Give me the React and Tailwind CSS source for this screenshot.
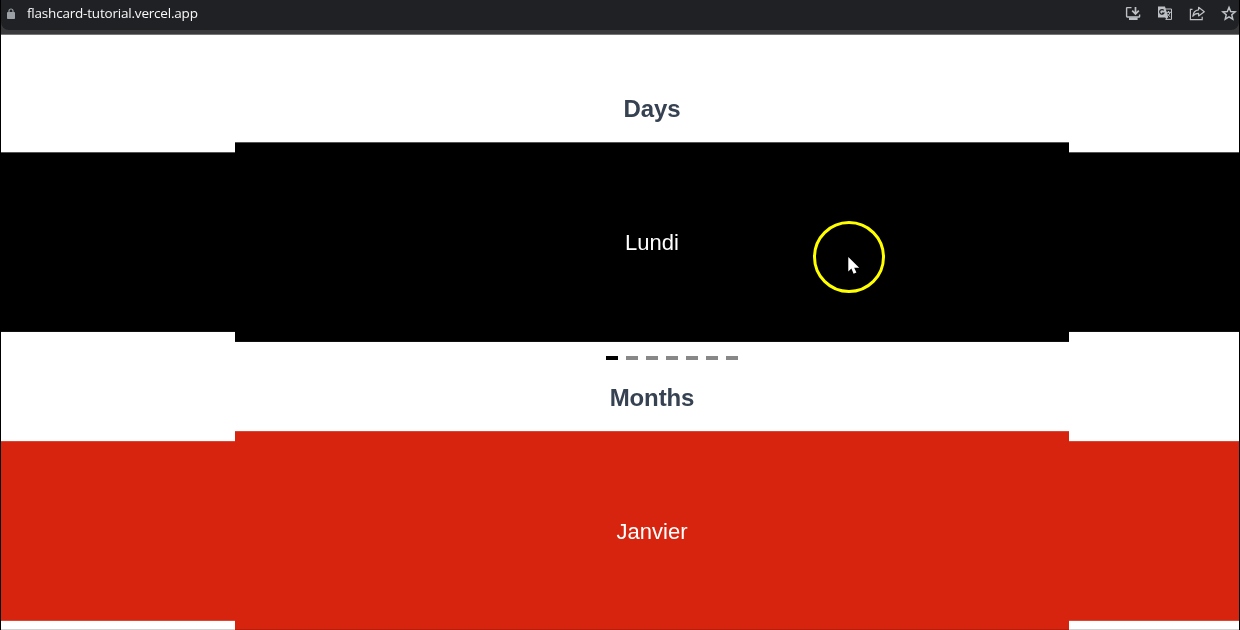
const BrowserBar = () => (
  <header className="h-[35px] shrink-0 border-b border-[#777575] bg-[#3a3a3c]">
    <div className="flex h-[30px] items-start justify-between rounded-bl-lg rounded-br-lg bg-[#202124] pl-[5px] pr-[2px]">
      <div className="flex items-start">
        <svg className="mt-2 h-[12px] w-[10px]" viewBox="0 0 10 12">
          <rect x="1" y="4" width="8" height="7" rx="0.8" fill="#9aa0a6" />
          <path d="M3 4.5V3a2 2 0 0 1 4 0v1.5" fill="none" stroke="#9aa0a6" strokeWidth="1.2" />
        </svg>
        <span className="ml-[11px] pt-[3px] text-[13.5px] leading-5 tracking-[-0.2px] whitespace-nowrap text-[#f8f8f9] font-['Open_Sans',sans-serif]">
          flashcard-tutorial.vercel.app
        </span>
      </div>
      <div className="flex gap-4 pt-[5px] text-[#bdc1c6]">
        <svg className="size-4" viewBox="0 0 16 16" fill="none" stroke="currentColor" strokeWidth="1.4">
          <path d="M6.5 2.6H2.2Q1.6 2.6 1.6 3.2V11.3Q1.6 12 2.2 12H14Q14.6 12 14.6 11.4V9.5" />
          <path d="M10.5 2v6.5M7.2 5.7l3.3 3.3 3.3-3.3" strokeWidth="1.7" />
          <path d="M4 13.7h8.6" strokeWidth="2.6" />
        </svg>
        <svg className="size-4" viewBox="0 0 16 16" fill="none">
          <path d="M8 4h6.5v10.4H8.5" stroke="currentColor" strokeWidth="1" />
          <path d="M1 1.5h7l3.2 11H1z" fill="currentColor" />
          <path d="M6.8 5.4A2.3 2.3 0 1 0 7 8H5" stroke="#202124" strokeWidth="1.2" />
          <path d="M9 7.3h5M11.5 6v1.3M13 7.5q-.8 2.8-3 4.2M10.2 8.5q1 2 3 3.3" stroke="currentColor" strokeWidth="1" />
          <path d="M8 12l1.5 2.5L11 12" fill="currentColor" />
        </svg>
        <svg className="size-4" viewBox="0 0 16 16" fill="none" stroke="currentColor" strokeWidth="1.2">
          <path d="M3.5 4.3H1.4v10.3h11.8v-2.8" />
          <path d="M9.6 2.3l5.7 4.4-5.7 4.2V8.3C7 8.2 5.2 9 3.8 11.3c.4-4 2.5-6.1 5.8-6.5z" strokeLinejoin="round" />
        </svg>
        <svg className="size-4" viewBox="0 0 16 16" fill="none" stroke="currentColor" strokeWidth="1.5">
          <path d="M8 2.4l1.7 4.1 4.5.4-3.4 2.9 1 4.3L8 11.8l-3.8 2.3 1-4.3L1.8 6.9l4.5-.4z" />
        </svg>
      </div>
    </div>
  </header>
);

const Heading = ({ children }) => (
  <h2 className="pl-[64px] text-center text-2xl leading-8 font-bold tracking-[-0.1px] text-[#364152]">{children}</h2>
);

const Carousel = ({ label, color, edge }) => (
  <div className="flex h-[200px] shrink-0 items-center">
    <div className={`h-[180px] w-[234px] border-y ${color} ${edge}`} />
    <div className={`flex h-[200px] w-[834px] items-center justify-center border-y text-[22px] text-white ${color} ${edge}`}>
      {label}
    </div>
    <div className={`h-[180px] w-[170px] border-y ${color} ${edge}`} />
  </div>
);

const Pointer = () => (
  <div className="pointer-events-none absolute top-[221px] left-[812px] size-[72px] rounded-full border-[3px] border-[#ffff00]">
    <svg className="absolute top-[33px] left-[32px] h-[18px] w-[12px]" viewBox="0 0 12 18">
      <path d="M0.3 0v14.6l3.1-3 2.2 5.2 2.8-1.2-2.2-4.8h5z" fill="#fff" />
    </svg>
  </div>
);

export default function App() {
  return (
    <div className="relative flex h-[630px] w-[1240px] flex-col overflow-hidden border-x border-black bg-white font-['Liberation_Sans',Arial,sans-serif]">
      <BrowserBar />
      <main className="flex min-h-0 flex-1 flex-col overflow-hidden pt-[58px]">
        <Heading>Days</Heading>
        <div className="mt-[17px]">
          <Carousel label="Lundi" color="bg-black" edge="border-t-[#555] border-b-[#111]" />
        </div>
        <div className="mt-[14px] ml-[605px] flex h-1 gap-2">
          {[0, 1, 2, 3, 4, 5, 6].map((day) => (
            <span key={day} className={`h-1 w-3 ${day === 0 ? "bg-black" : "bg-[#888]"}`} />
          ))}
        </div>
        <div className="mt-[22px]">
          <Heading>Months</Heading>
        </div>
        <div className="mt-[17px]">
          <Carousel label="Janvier" color="bg-[#d7240f]" edge="border-t-[#d94837] border-b-[#d94837]" />
        </div>
      </main>
      <div className="absolute bottom-0 left-0 h-px w-full bg-[#d5d0cf] mix-blend-multiply" />
      <Pointer />
    </div>
  );
}
